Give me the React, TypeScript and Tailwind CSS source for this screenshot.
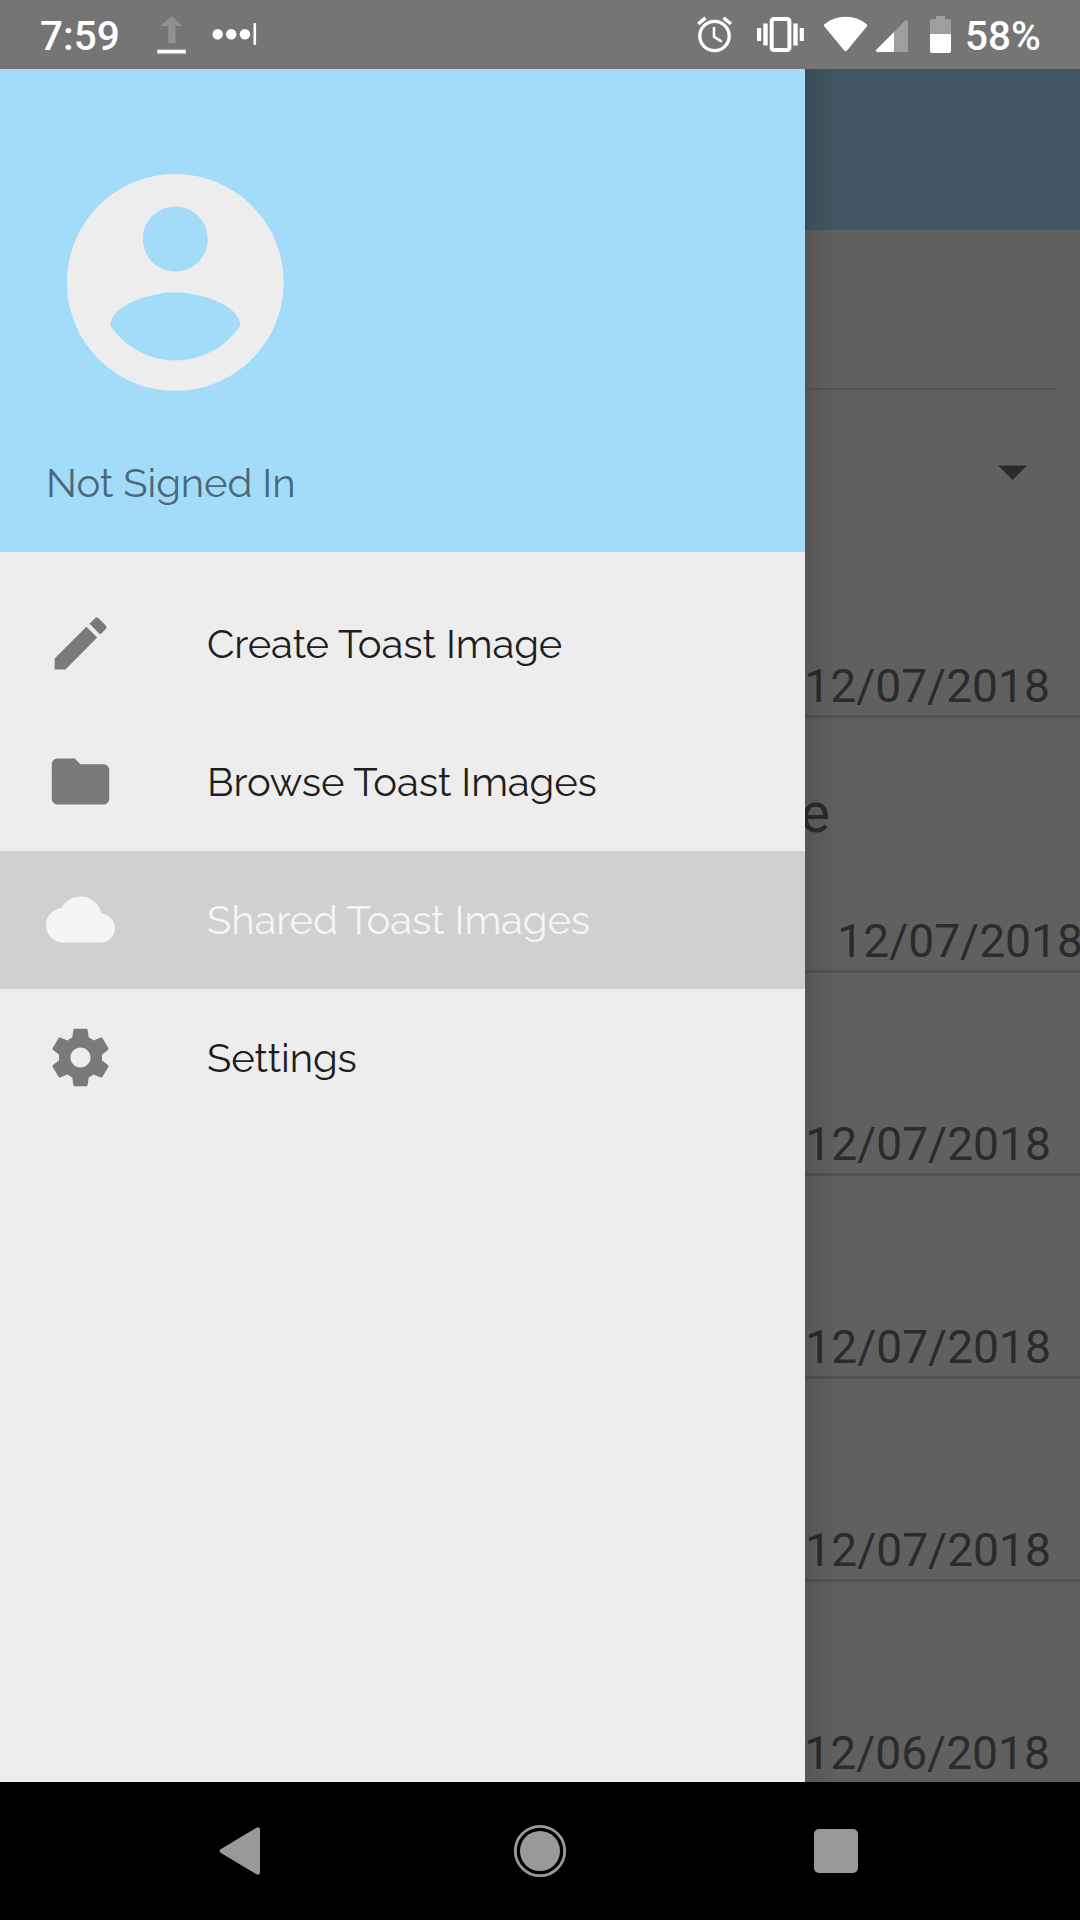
import React from "react";

const ICONS = {
  edit: "M3 17.25V21h3.75L17.81 9.94l-3.75-3.75L3 17.25zM20.71 7.04c.39-.39.39-1.02 0-1.41l-2.34-2.34c-.39-.39-1.02-.39-1.41 0l-1.83 1.83 3.75 3.75 1.83-1.83z",
  folder: "M10 4H4c-1.1 0-1.99.9-1.99 2L2 18c0 1.1.9 2 2 2h16c1.1 0 2-.9 2-2V8c0-1.1-.9-2-2-2h-8l-2-2z",
  cloud: "M19.35 10.04C18.67 6.59 15.64 4 12 4 9.11 4 6.6 5.64 5.35 8.04 2.34 8.36 0 10.91 0 14c0 3.31 2.69 6 6 6h13c2.76 0 5-2.24 5-5 0-2.64-2.05-4.78-4.65-4.96z",
  settings:
    "M19.43 12.98c.04-.32.07-.64.07-.98s-.03-.66-.07-.98l2.11-1.65c.19-.15.24-.42.12-.64l-2-3.46c-.12-.22-.39-.3-.61-.22l-2.49 1c-.52-.4-1.08-.73-1.69-.98l-.38-2.65C14.46 2.18 14.25 2 14 2h-4c-.25 0-.46.18-.49.42l-.38 2.65c-.61.25-1.17.59-1.69.98l-2.49-1c-.23-.09-.49 0-.61.22l-2 3.46c-.13.22-.07.49.12.64l2.11 1.65c-.04.32-.07.65-.07.98s.03.66.07.98l-2.11 1.65c-.19.15-.24.42-.12.64l2 3.46c.12.22.39.3.61.22l2.49-1c.52.4 1.08.73 1.69.98l.38 2.65c.03.24.24.42.49.42h4c.25 0 .46-.18.49-.42l.38-2.65c.61-.25 1.17-.59 1.69-.98l2.49 1c.23.09.49 0 .61-.22l2-3.46c.12-.22.07-.49-.12-.64l-2.11-1.65zM12 15.5c-1.93 0-3.5-1.57-3.5-3.5s1.57-3.5 3.5-3.5 3.5 1.57 3.5 3.5-1.57 3.5-3.5 3.5z",
  account:
    "M12 2C6.48 2 2 6.48 2 12s4.48 10 10 10 10-4.48 10-10S17.52 2 12 2zm0 3c1.66 0 3 1.34 3 3s-1.34 3-3 3-3-1.34-3-3 1.34-3 3-3zm0 14.2c-2.5 0-4.71-1.28-6-3.22.03-1.99 4-3.08 6-3.08 1.99 0 5.97 1.09 6 3.08-1.29 1.94-3.5 3.22-6 3.22z",
};

const MENU = [
  { icon: ICONS.edit, label: "Create Toast Image" },
  { icon: ICONS.folder, label: "Browse Toast Images" },
  { icon: ICONS.cloud, label: "Shared Toast Images", selected: true },
  { icon: ICONS.settings, label: "Settings" },
];

const ROWS = [
  { date: "12/07/2018", size: "h-[203px]", pad: "pr-[30px]" },
  { date: "12/07/2018", size: "h-[255px]", pad: "-mr-[3px]", title: "e" },
  { date: "12/07/2018", size: "h-[203px]", pad: "pr-[29px]" },
  { date: "12/07/2018", size: "h-[203px]", pad: "pr-[29px]" },
  { date: "12/07/2018", size: "h-[203px]", pad: "pr-[29px]" },
  { date: "12/06/2018", size: "h-[203px]", pad: "pr-[30px]" },
];

function StatusBar() {
  return (
    <header className="flex h-[69px] shrink-0 items-start bg-[#757575] pl-[40px] font-[Roboto] text-[40.5px] leading-[73px] font-medium text-white">
      <span className="w-[117px]">7:59</span>
      <svg className="w-[30px] shrink-0" height="69" viewBox="157 0 30 69">
        <path d="M171.7 16L182.700 26H175.500V43.300H168.200V26H160.500Z" fill="#919191" />
        <rect x="157.300" y="49.700" width="28.500" height="3.800" fill="#fff" />
      </svg>
      <svg className="ml-[25px] w-[46px] shrink-0" height="69" viewBox="212 0 46 69" fill="#fff">
        <circle cx="217.700" cy="34.200" r="5.200" />
        <circle cx="231.200" cy="34.200" r="5.200" />
        <circle cx="244.900" cy="34.200" r="5.200" />
        <rect x="253.500" y="23" width="2.600" height="22" rx="1" />
      </svg>
      <svg className="ml-[438px] w-[38px] shrink-0" height="69" viewBox="696 0 38 69" fill="none" stroke="#fff">
        <circle cx="714.500" cy="36" r="14.700" strokeWidth="3.300" />
        <path d="M714 27V36.700L721.800 41.600" strokeWidth="2.500" />
        <path d="M698.200 24L705.500 17.800M723.500 17.800L731 24" strokeWidth="3.500" />
      </svg>
      <svg className="ml-[22px] w-[50px] shrink-0" height="69" viewBox="756 0 50 69" fill="#fff">
        <rect x="757" y="28" width="4.200" height="13" />
        <rect x="763.300" y="23.500" width="4.400" height="22" />
        <rect x="771.700" y="18.900" width="17.700" height="31.200" rx="2.200" fill="none" stroke="#fff" strokeWidth="4" />
        <rect x="793.300" y="23.500" width="4.400" height="22" />
        <rect x="799.700" y="28" width="4.200" height="13" />
      </svg>
      <svg className="ml-[17px] w-[46px] shrink-0" height="69" viewBox="823 0 46 69" fill="#fff">
        <path d="M824.200 24.500Q833 16.700 845.600 16.700T867 24.500Q867.600 25.500 866.800 26.500L847.200 50.300Q845.600 52 844 50.300L824.400 26.500Q823.500 25.500 824.200 24.500Z" />
      </svg>
      <svg className="ml-[6px] w-[34px] shrink-0" height="69" viewBox="875 0 34 69">
        <path d="M894 32L905 20.500Q908 18.500 908 21.500V52H894Z" fill="#9e9e9e" />
        <path d="M894 32V52H877.500Q875 51.500 876.500 49.500Z" fill="#fff" />
      </svg>
      <svg className="ml-[20px] w-[24px] shrink-0" height="69" viewBox="929 0 24 69">
        <path d="M936 16H945V19H949.500Q951 19 951 21V34H930V21Q930 19 931.500 19H936Z" fill="#9e9e9e" />
        <path d="M930 34H951V51Q951 53 949 53H932Q930 53 930 51Z" fill="#fff" />
      </svg>
      <span className="ml-[12px]">58%</span>
    </header>
  );
}

function ImageList() {
  return (
    <div className="flex h-full flex-col overflow-hidden bg-[#606060] font-[Roboto] text-[#2b2b2b]">
      <div className="h-[161px] shrink-0 bg-[#415662]" />
      <div className="mr-[23px] h-[160px] shrink-0 border-b-2 border-[#555555]" />
      <div className="flex h-[125px] shrink-0 justify-end pt-[75px] pr-[53px]">
        <svg width="29" height="16" viewBox="0 0 29 16">
          <path d="M0 0.600H29L14.500 15.100Z" fill="#2b2b2b" />
        </svg>
      </div>
      {ROWS.map((row, i) => (
        <div key={i} className={`flex shrink-0 flex-col items-end justify-end border-b-3 border-[#535353] ${row.size}`}>
          {row.title && <div className="mb-[69px] pr-[250px] text-[56px] leading-[60px]">{row.title}</div>}
          <div className={`text-[46.2px] leading-[58px] whitespace-nowrap ${row.pad}`}>{row.date}</div>
        </div>
      ))}
    </div>
  );
}

function Drawer() {
  return (
    <aside className="absolute inset-y-0 left-0 flex w-[805px] flex-col bg-[#ededed] font-[Raleway,Lato,sans-serif] text-[40px] tracking-[-0.08px]">
      <div className="flex h-[483px] shrink-0 flex-col bg-[#a3dcf9] pt-[83px] text-[#4a6879]">
        <svg className="ml-[45px]" width="260" height="260" viewBox="-0.03 -0.04 24 24" fill="#ededed">
          <path d={ICONS.account} />
        </svg>
        <span className="mt-[41px] ml-[46px] leading-[60px]">Not Signed In</span>
      </div>
      <nav className="flex flex-col pt-[23px]">
        {MENU.map((item) => (
          <a
            key={item.label}
            className={`flex h-[138px] items-center gap-[92px] pl-[46px] ${item.selected ? "bg-[#d0d0d0] text-[#f5f5f5]" : "text-[#1e1e1e]"}`}
          >
            <svg className="mb-[2px]" width="69" height="69" viewBox="0 0 24 24" fill={item.selected ? "#f5f5f5" : "#7a7a7a"}>
              <path d={item.icon} />
            </svg>
            <span>{item.label}</span>
          </a>
        ))}
      </nav>
    </aside>
  );
}

function NavigationBar() {
  return (
    <footer className="flex h-[138px] shrink-0 items-center bg-black pl-[219px]">
      <svg width="42" height="48" viewBox="0 0 42 48" fill="#999">
        <path d="M37 1Q41 -1 41 3V45Q41 49 37 47L2 26Q-1 24 2 22Z" />
      </svg>
      <svg className="ml-[252px]" width="54" height="54" viewBox="0 0 54 54">
        <circle cx="27" cy="27" r="24.700" fill="none" stroke="#999" strokeWidth="2.800" />
        <circle cx="27" cy="27" r="20" fill="#999" />
      </svg>
      <div className="ml-[247px] size-[44px] rounded-[5px] bg-[#999]" />
    </footer>
  );
}

export default function App() {
  return (
    <div className="flex h-[1920px] w-[1080px] flex-col overflow-hidden">
      <StatusBar />
      <main className="relative h-[1713px] shrink-0 overflow-hidden">
        <ImageList />
        <div className="absolute inset-y-0 left-[805px] w-[32px] bg-gradient-to-r from-black/12 to-transparent" />
        <Drawer />
      </main>
      <NavigationBar />
    </div>
  );
}
